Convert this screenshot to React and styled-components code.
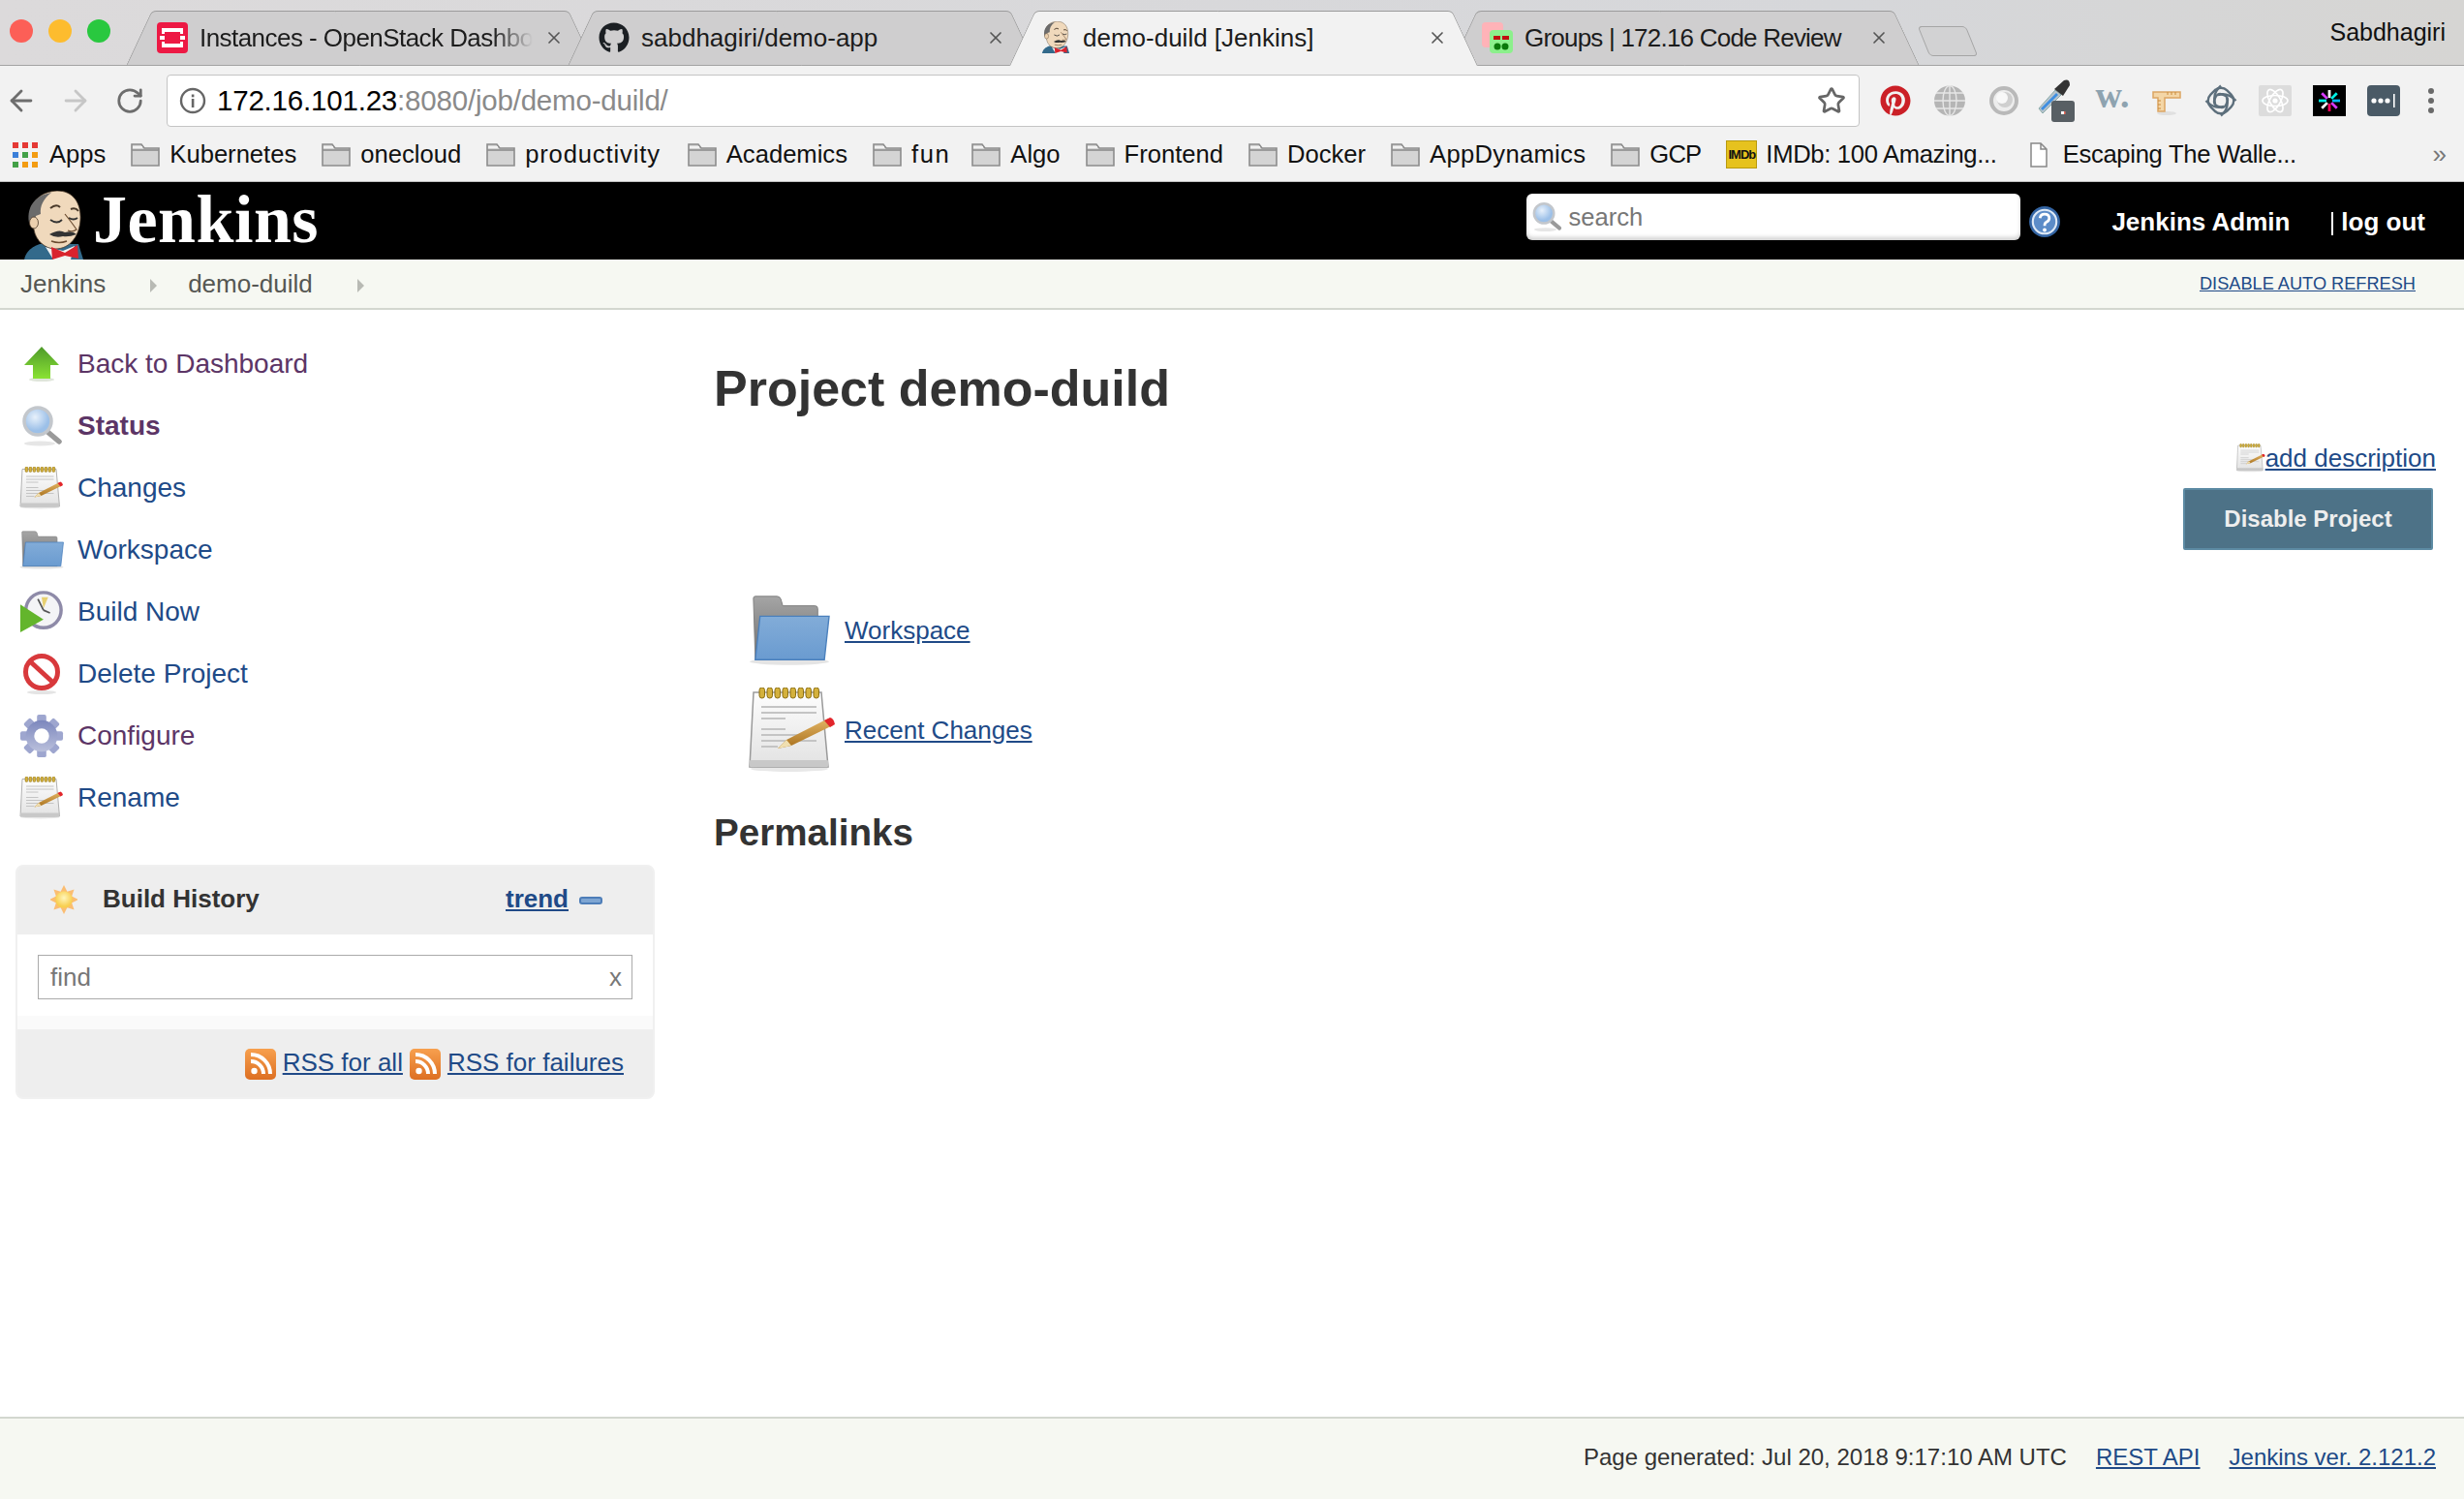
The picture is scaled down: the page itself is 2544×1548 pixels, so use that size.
import React from 'react';
import styled, { createGlobalStyle } from 'styled-components';
import { ArrowLeft, ArrowRight, RotateCw, Star, X } from 'lucide-react';
import { FaGithub, FaPinterest } from 'react-icons/fa';

const Global = createGlobalStyle`
  html, body { margin: 0; padding: 0; background: #fff; }
  body { font-family: "Liberation Sans", Arial, sans-serif; color: #333; }
  * { box-sizing: border-box; }
`;

const Page = styled.div`
  display: flex;
  flex-direction: column;
  min-height: 100vh;
`;

/* ---------- browser chrome ---------- */
const TabStrip = styled.div`
  display: flex;
  align-items: flex-end;
  height: 68px;
  border-bottom: 1px solid #a3a3a3;
  background: linear-gradient(90deg, #dcdadb, #d6d7da 75%, #d6d5d3);
`;
const Lights = styled.div`
  flex: 0 0 157px;
  align-self: flex-start;
  display: flex;
  gap: 16px;
  padding: 20px 0 0 10px;
`;
const Light = styled.span`
  width: 24px;
  height: 24px;
  border-radius: 50%;
  background: ${p => p.$c};
`;
const Tab = styled.div`
  position: relative;
  flex: 0 0 483px;
  min-width: 0;
  height: 57px;
  margin-left: -27px;
  margin-bottom: -1px;
  padding: 0 31px 2px 32px;
  display: flex;
  align-items: center;
  gap: 12px;
  z-index: ${p => (p.$active ? 3 : 1)};
  &::before, &::after {
    content: '';
    position: absolute;
    top: 0;
    bottom: 0;
    background: ${p => (p.$active ? '#f2f2f2' : '#cfcecf')};
    border-top: 1px solid #9c9c9c;
    ${p => (p.$active ? '' : 'border-bottom: 1px solid #a3a3a3;')}
  }
  &::before {
    left: 0;
    right: 50%;
    transform-origin: bottom left;
    transform: skewX(-25deg);
    border-left: 1px solid #9c9c9c;
    border-top-left-radius: 5px;
  }
  &::after {
    left: 50%;
    right: 0;
    transform-origin: bottom right;
    transform: skewX(25deg);
    border-right: 1px solid #9c9c9c;
    border-top-right-radius: 5px;
  }
`;
const TabIcon = styled.span`
  position: relative;
  z-index: 1;
  flex: 0 0 32px;
  height: 32px;
  display: flex;
  align-items: center;
  justify-content: center;
`;
const TabTitle = styled.span`
  position: relative;
  z-index: 1;
  flex: 1;
  min-width: 0;
  overflow: hidden;
  white-space: nowrap;
  font-size: 26px;
  letter-spacing: ${p => p.$ls ?? 0}px;
  line-height: 32px;
  color: #1c1c1c;
  ${p => p.$fade && 'mask-image: linear-gradient(90deg, #000 88%, transparent 100%);'}
`;
const TabClose = styled(X)`
  position: relative;
  z-index: 1;
  flex: 0 0 20px;
  color: #555;
`;
const NewTab = styled.div`
  flex: 0 0 50px;
  height: 31px;
  margin: 0 0 9px 5px;
  align-self: flex-end;
  background: #d2d2d3;
  border: 1px solid #a5a5a5;
  border-radius: 4px;
  transform: skewX(22deg);
`;
const Profile = styled.span`
  margin-left: auto;
  align-self: flex-start;
  padding: 18px 19px 0 0;
  font-size: 25px;
  line-height: 30px;
  color: #111;
`;

const Toolbar = styled.div`
  display: flex;
  align-items: center;
  gap: 12px;
  height: 72px;
  background: #f2f2f2;
`;
const NavButton = styled.span`
  flex: 0 0 44px;
  display: flex;
  justify-content: center;
  color: ${p => (p.$off ? '#c6c6c6' : '#6d6d6d')};
`;
const Omnibox = styled.div`
  flex: 0 0 1748px;
  height: 54px;
  margin-left: 4px;
  padding: 0 13px 0 12px;
  display: flex;
  align-items: center;
  background: #fff;
  border: 1px solid #c4c4c4;
  border-radius: 4px;
`;
const Url = styled.span`
  margin-left: 11px;
  flex: 1;
  font-size: 29.5px;
  letter-spacing: -0.2px;
  color: #8a8a8a;
  b { font-weight: 400; color: #000; }
`;
const Extensions = styled.div`
  display: flex;
  align-items: center;
  margin-left: -3px;
`;
const Ext = styled.span`
  flex: 0 0 56px;
  display: flex;
  justify-content: center;
  align-items: center;
  height: 50px;
  ${p => p.$shift && `margin-left: ${p.$shift}px;`}
`;
const ExtW = styled.span`
  font-family: "Liberation Serif", serif;
  font-weight: 700;
  font-size: 38px;
  color: #8ea3b0;
  line-height: 30px;
  margin-top: -12px;
`;

const Bookmarks = styled.div`
  display: flex;
  align-items: center;
  gap: 26px;
  height: 48px;
  padding: 0 0 8px 13px;
  background: #f2f2f2;
  border-bottom: 1px solid #c0c0c0;
`;
const Mark = styled.span`
  display: flex;
  align-items: center;
  gap: ${p => p.$gap ?? 10}px;
  margin-left: ${p => p.$push ?? 0}px;
  font-size: 25.6px;
  letter-spacing: ${p => p.$ls ?? 0}px;
  color: #111;
  white-space: nowrap;
`;
const More = styled.span`
  margin-left: auto;
  padding-right: 18px;
  font-size: 26px;
  color: #777;
`;
const ImdbIcon = styled.span`
  flex: 0 0 32px;
  height: 29px;
  background: #e6c21e;
  border: 1px solid #b89a10;
  color: #111;
  font-size: 13px;
  font-weight: 700;
  line-height: 27px;
  letter-spacing: -1px;
  overflow: hidden;
  text-align: center;
`;

/* ---------- jenkins header ---------- */
const Header = styled.header`
  display: flex;
  align-items: flex-end;
  height: 80px;
  background: #000;
  color: #fff;
`;
const Logo = styled.div`
  display: flex;
  align-items: flex-end;
  gap: 8px;
  padding-left: 23px;
  svg { display: block; }
`;
const Brand = styled.span`
  font-family: "Liberation Serif", serif;
  font-weight: 700;
  font-size: 70px;
  letter-spacing: 0.5px;
  line-height: 80px;
  align-self: center;
  margin-top: -12px;
`;
const Search = styled.div`
  margin: 0 0 20px auto;
  width: 510px;
  height: 48px;
  padding: 0 6px 0 5px;
  display: flex;
  align-items: center;
  gap: 6px;
  background: #fff;
  border-radius: 6px;
  box-shadow: inset 0 -3px 4px rgba(0, 0, 0, 0.18);
  font-size: 25.6px;
  color: #777;
`;
const Help = styled.span`
  margin: 0 0 22px 8px;
  display: flex;
`;
const UserLink = styled.span`
  margin: 0 0 22px 52px;
  font-size: 26px;
  font-weight: 700;
  line-height: 34px;
`;
const LogOut = styled.span`
  margin: 0 40px 22px 43px;
  font-size: 26px;
  font-weight: 700;
  line-height: 34px;
  padding-left: 10px;
  background: linear-gradient(#fff, #fff) 0 7px / 2px 24px no-repeat;
`;

const Crumbs = styled.nav`
  display: flex;
  align-items: center;
  height: 52px;
  padding: 0 50px 0 21px;
  background: #f6f8f2;
  border-bottom: 2px solid #d3d7cf;
  font-size: 26px;
  color: #555753;
`;
const Crumb = styled.span`
  line-height: 30px;
`;
const CrumbArrow = styled.span`
  width: 0;
  height: 0;
  margin: 3px 32px 0 46px;
  border-left: 7px solid #b8bab4;
  border-top: 7px solid transparent;
  border-bottom: 7px solid transparent;
`;
const Refresh = styled.a`
  margin-left: auto;
  font-size: 18.2px;
  color: #204a87;
  text-decoration: underline;
`;

/* ---------- body ---------- */
const Columns = styled.div`
  flex: 1;
  display: grid;
  grid-template-columns: 737px 1fr;
`;
const Side = styled.aside`
  padding-top: 24px;
`;
const SideRow = styled.div`
  display: flex;
  align-items: center;
  height: 64px;
  padding-left: 20px;
  gap: 14px;
  font-size: 28px;
  font-weight: ${p => (p.$bold ? 700 : 400)};
  color: ${p => (p.$visited ? '#5c3566' : '#204a87')};
`;
const SideIcon = styled.span`
  flex: 0 0 46px;
  min-width: 0;
  display: flex;
  justify-content: center;
  svg { flex: none; }
`;
const Panel = styled.section`
  width: 660px;
  margin: 37px 0 0 16px;
  background: #eee;
  border: 2px solid #f0f0f0;
  border-radius: 8px;
  overflow: hidden;
`;
const PanelHead = styled.div`
  display: flex;
  align-items: center;
  height: 70px;
  padding: 0 0 3px 34px;
`;
const PanelTitle = styled.span`
  margin-left: 26px;
  font-size: 26px;
  font-weight: 700;
  color: #333;
`;
const Trend = styled.a`
  margin-left: auto;
  font-size: 26px;
  font-weight: 700;
  color: #204a87;
  text-decoration: underline;
`;
const Pill = styled.span`
  width: 24px;
  height: 8px;
  margin: 3px 52px 0 11px;
  background: #7ea5d2;
  border: 2px solid #4d7db8;
  border-radius: 3px;
`;
const PanelBody = styled.div`
  height: 98px;
  padding: 21px 21px 0;
  background: linear-gradient(#fff 84px, #fafafa 84px);
`;
const Find = styled.div`
  display: flex;
  justify-content: space-between;
  align-items: center;
  height: 46px;
  padding: 0 10px 0 12px;
  background: #fff;
  border: 1px solid #aaa;
  font-size: 26px;
  color: #777;
`;
const PanelFoot = styled.div`
  display: flex;
  justify-content: flex-end;
  align-items: center;
  gap: 7px;
  height: 70px;
  padding: 0 30px 2px 0;
  font-size: 26px;
`;
const RssLink = styled.a`
  color: #204a87;
  text-decoration: underline;
`;
const RssIcon = styled.span`
  display: flex;
  margin-top: 3px;
`;

const Main = styled.main`
  padding: 0 29px 0 0;
  display: flex;
  flex-direction: column;
`;
const Title = styled.h1`
  margin: 50px 0 0;
  font-size: 52px;
  line-height: 62px;
  font-weight: 700;
  color: #333;
`;
const Description = styled.div`
  display: flex;
  justify-content: flex-end;
  align-items: center;
  margin-top: 25px;
  height: 32px;
  font-size: 26px;
  a { color: #204a87; text-decoration: underline; }
`;
const ActionRow = styled.div`
  display: flex;
  justify-content: flex-end;
  margin-top: 15px;
  padding-right: 3px;
`;
const DisableButton = styled.button`
  width: 258px;
  height: 64px;
  padding: 0;
  font-family: inherit;
  font-size: 24px;
  font-weight: 700;
  color: #eee;
  background: #4d7287;
  border: 2px solid #5c8aa3;
  border-radius: 2px;
`;
const LinkList = styled.div`
  display: flex;
  flex-direction: column;
  gap: 21px;
  margin-top: 45px;
  padding-left: 36px;
`;
const LinkRow = styled.div`
  display: flex;
  align-items: center;
  gap: ${p => p.$gap}px;
  font-size: 26px;
  a {
    color: #204a87;
    text-decoration: underline;
  }
  svg { display: block; }
`;
const Subhead = styled.h2`
  margin: 39px 0 0;
  font-size: 38.6px;
  line-height: 46px;
  font-weight: 700;
  color: #333;
`;

const Footer = styled.footer`
  display: flex;
  justify-content: flex-end;
  align-items: center;
  gap: 30px;
  height: 85px;
  padding: 0 29px 3px 0;
  background: #f6f8f2;
  border-top: 2px solid #d3d7cf;
  font-size: 24px;
  color: #333;
  a { color: #204a87; text-decoration: underline; }
`;

/* ---------- drawings ---------- */
const Butler = ({ w = 65, h = 71 }) => (
  <svg width={w} height={h} viewBox="0 0 65 71">
    <path d="M2 71 C4 62 10 58 18 55 L58 55 L63 71 Z" fill="#336a8b" />
    <path d="M24 58 L42 62 L54 57 L50 71 L32 71 Z" fill="#f2f2f2" />
    <path d="M8 28 C8 10 20 1 36 0 C52 0 61 12 60 30 C59 46 50 60 34 60 C24 60 14 52 12 40 Z" fill="#f0d9bc" stroke="#4a3a2a" strokeWidth="0.8" />
    <path d="M7 33 C4 14 16 4 30 2 C22 8 18 16 19 24 L14 26 L12 36 Z" fill="#6b6b6b" />
    <ellipse cx="12" cy="33" rx="4.5" ry="6" fill="#ecd0ae" stroke="#4a3a2a" strokeWidth="0.8" />
    <path d="M29 18 q6 -5 10 -1 M50 19 q5 -2 8 2" fill="none" stroke="#4a3a2a" strokeWidth="2" />
    <path d="M29 30 q7 5 12 0 M48 28 q5 3 9 0" fill="none" stroke="#333" strokeWidth="1.8" />
    <path d="M44 24 q8 10 12 16 q-4 3 -9 1" fill="none" stroke="#6b4c30" strokeWidth="1.2" />
    <path d="M28 45 q10 -6 16 -2 q8 -2 12 2 q-8 3 -14 2 q-8 2 -14 -2 Z" fill="#333" />
    <path d="M30 52 q8 3 16 0" fill="none" stroke="#6b4c30" strokeWidth="1.4" />
    <path d="M30 58 L44 64 L57 56 L58 70 L44 67 L31 71 Z" fill="#d9232e" />
  </svg>
);

const OpenStackIcon = () => (
  <svg width="32" height="32" viewBox="0 0 32 32">
    <rect width="32" height="32" rx="4" fill="#ed1944" />
    <path d="M5 6 H27 V12 H24 V10 H8 V12 H5 Z M5 20 H8 V22 H24 V20 H27 V26 H5 Z M3 14 H8 V18 H3 Z M24 14 H29 V18 H24 Z" fill="#fff" />
  </svg>
);
const GroupsIcon = () => (
  <svg width="32" height="32" viewBox="0 0 32 32">
    <rect x="0" y="0" width="22" height="26" rx="4" fill="#ffb3b8" />
    <rect x="8" y="8" width="24" height="24" rx="4" fill="#8cf08c" />
    <rect x="12" y="14" width="7" height="4" fill="#c01010" />
    <rect x="21" y="14" width="7" height="4" fill="#c01010" />
    <circle cx="16" cy="25" r="3.5" fill="#0a7a0a" />
    <circle cx="24" cy="25" r="3.5" fill="#0a7a0a" />
  </svg>
);

const FolderMark = () => (
  <svg width="30" height="26" viewBox="0 0 30 26">
    <path d="M1 24 V2 H11 L14 6 H29 V24 Z" fill="#d4d4d4" stroke="#8c8c8c" strokeWidth="1.6" />
    <path d="M1 8 H29" stroke="#8c8c8c" strokeWidth="1.6" />
    <path d="M2 5 H12" stroke="#f2f2f2" strokeWidth="2" />
  </svg>
);
const AppsMark = () => {
  const c = ['#e53935', '#e53935', '#e53935', '#3b7fd9', '#43a047', '#f39c12', '#43a047', '#f39c12', '#f39c12'];
  return (
    <svg width="26" height="26" viewBox="0 0 26 26">
      {c.map((f, i) => (
        <rect key={i} x={(i % 3) * 10} y={Math.floor(i / 3) * 10} width="6" height="6" fill={f} />
      ))}
    </svg>
  );
};
const PageMark = () => (
  <svg width="18" height="26" viewBox="0 0 18 26">
    <path d="M1 1 H11 L17 7 V25 H1 Z M11 1 V7 H17" fill="#fff" stroke="#888" strokeWidth="1.5" />
  </svg>
);
const InfoIcon = () => (
  <svg width="28" height="28" viewBox="0 0 28 28">
    <circle cx="14" cy="14" r="12" fill="none" stroke="#666" strokeWidth="2.4" />
    <rect x="12.8" y="12" width="2.6" height="9" fill="#666" />
    <rect x="12.8" y="7.5" width="2.6" height="2.8" fill="#666" />
  </svg>
);
const Globe = () => (
  <svg width="34" height="32" viewBox="0 0 34 32">
    <ellipse cx="17" cy="16" rx="16" ry="15.5" fill="#b5b5b5" />
    <g fill="none" stroke="#e6e6e6" strokeWidth="1.4">
      <ellipse cx="17" cy="16" rx="7" ry="15.5" />
      <path d="M17 0 V32 M1 16 H33 M3 8 H31 M3 24 H31" />
    </g>
  </svg>
);
const Marble = () => (
  <svg width="30" height="30" viewBox="0 0 30 30">
    <circle cx="15" cy="15" r="13" fill="#ededed" stroke="#b9b9b9" strokeWidth="4" />
    <circle cx="16" cy="14" r="8" fill="#cfcfcf" />
    <circle cx="13" cy="12" r="6" fill="#f8f8f8" />
  </svg>
);
const Dropper = () => (
  <svg width="44" height="44" viewBox="0 0 44 44">
    <path d="M2 30 L19 11 L25 16 L6 35 Z" fill="#b9c4cc" stroke="#8aa" strokeWidth="1" />
    <path d="M4 30 L20 14 L22 16 L6 32 Z" fill="#3f8fe0" />
    <path d="M18 10 L28 1 Q34 -1 34 6 L27 17 Z" fill="#333" />
    <rect x="15" y="22" width="24" height="22" rx="3" fill="#585f64" />
    <rect x="25" y="33" width="3" height="3" fill="#fff" />
    <rect x="28" y="33" width="1.5" height="3" fill="#e86a5a" />
  </svg>
);
const Ruler = () => (
  <svg width="30" height="32" viewBox="0 0 30 32">
    <ellipse cx="15" cy="29" rx="10" ry="2" fill="#e0e0e0" />
    <path d="M1 7 H29 V13 H13 V27 H6 V13 H1 Z" fill="#f4d6a6" stroke="#dba563" strokeWidth="1.5" />
    <path d="M16 7 V10 M20 7 V10 M24 7 V10 M6 16 H9 M6 20 H9 M6 24 H9" stroke="#c98a3a" strokeWidth="1" />
  </svg>
);
const Swirl = () => (
  <svg width="34" height="34" viewBox="0 0 34 34" fill="none" stroke="#5d6f7c" strokeWidth="2.4">
    <rect x="5" y="5" width="24" height="24" rx="9" transform="rotate(45 17 17)" />
    <rect x="10.5" y="10.5" width="13" height="13" rx="5" transform="rotate(20 17 17)" />
    <path d="M17 1.5 Q8 9 11 20 M32.5 17 Q24 8 14 11 M17 32.5 Q26 25 23 14 M1.5 17 Q10 26 20 23" />
  </svg>
);
const ReactExt = () => (
  <svg width="34" height="32" viewBox="0 0 34 32">
    <rect width="34" height="32" rx="2" fill="#dcdcdc" />
    <g fill="none" stroke="#fff" strokeWidth="1.6">
      <ellipse cx="17" cy="16" rx="13" ry="5.5" />
      <ellipse cx="17" cy="16" rx="13" ry="5.5" transform="rotate(60 17 16)" />
      <ellipse cx="17" cy="16" rx="13" ry="5.5" transform="rotate(120 17 16)" />
    </g>
    <circle cx="17" cy="16" r="2.6" fill="#fff" />
  </svg>
);
const JwtExt = () => {
  const c = ['#fff', '#00f2e6', '#00b9f1', '#d63aff', '#fb015b', '#fff', '#00f2e6', '#d63aff'];
  return (
    <svg width="34" height="32" viewBox="0 0 34 32">
      <rect width="34" height="32" fill="#000" />
      {c.map((f, i) => (
        <rect key={i} x="15.6" y="5" width="2.8" height="8" fill={f} transform={`rotate(${i * 45} 17 16)`} />
      ))}
    </svg>
  );
};
const DotsExt = () => (
  <svg width="34" height="32" viewBox="0 0 34 32">
    <rect width="34" height="32" rx="4" fill="#4a5a66" />
    <circle cx="7" cy="16" r="2.6" fill="#fff" />
    <circle cx="14" cy="16" r="2.6" fill="#fff" />
    <circle cx="21" cy="16" r="2.6" fill="#fff" />
    <rect x="27" y="9" width="1.6" height="14" fill="#fff" />
  </svg>
);
const Kebab = () => (
  <svg width="10" height="28" viewBox="0 0 10 28">
    <circle cx="5" cy="4" r="3" fill="#6a6a6a" />
    <circle cx="5" cy="14" r="3" fill="#6a6a6a" />
    <circle cx="5" cy="24" r="3" fill="#6a6a6a" />
  </svg>
);

const Magnifier = ({ size = 44 }) => (
  <svg width={size} height={size} viewBox="0 0 44 44">
    <defs>
      <radialGradient id="lens" cx="40%" cy="35%">
        <stop offset="0" stopColor="#e8f1fb" />
        <stop offset="1" stopColor="#9cc0e8" />
      </radialGradient>
    </defs>
    <ellipse cx="20" cy="40" rx="16" ry="2.5" fill="#e6e6e6" />
    <path d="M27 27 L40 38" stroke="#9a9a9a" strokeWidth="5.5" strokeLinecap="round" />
    <circle cx="18" cy="17" r="14" fill="url(#lens)" stroke="#c3c7cc" strokeWidth="3.5" />
  </svg>
);
const UpArrow = () => (
  <svg width="38" height="38" viewBox="0 0 38 38">
    <defs>
      <linearGradient id="up" x1="0" y1="0" x2="0" y2="1">
        <stop offset="0" stopColor="#4e9a2a" />
        <stop offset="1" stopColor="#8ae234" />
      </linearGradient>
    </defs>
    <ellipse cx="19" cy="35" rx="13" ry="2" fill="#dfe5da" />
    <path d="M19 1 L37 20 H28 V34 H10 V20 H1 Z" fill="url(#up)" />
  </svg>
);
const Notepad = ({ w = 46, h = 44 }) => (
  <svg width={w} height={h} viewBox="0 0 90 88">
    <defs>
      <linearGradient id="padp" x1="0" y1="0" x2="0" y2="1">
        <stop offset="0" stopColor="#fdfdfd" />
        <stop offset="1" stopColor="#e2e2e2" />
      </linearGradient>
      <linearGradient id="pen" x1="0" y1="0" x2="0" y2="1">
        <stop offset="0" stopColor="#e3b565" />
        <stop offset="1" stopColor="#a8701c" />
      </linearGradient>
    </defs>
    <ellipse cx="42" cy="84" rx="40" ry="3" fill="#e8e8e8" />
    <path d="M5 5 H75 L82 82 H1 Z" fill="url(#padp)" stroke="#9a9a9a" strokeWidth="1.5" />
    <rect x="1" y="75" width="81" height="7" rx="1" fill="#c8c8c8" />
    {[0, 1, 2, 3, 4, 5, 6, 7].map(i => (
      <rect key={i} x={11 + i * 8} y="0" width="5.5" height="11" rx="2.7" fill="#d4b13c" stroke="#8a6d12" strokeWidth="1" />
    ))}
    <g stroke="#c4c4c4" strokeWidth="2">
      <path d="M13 20 H70 M13 26 H70 M13 32 H38 M13 43 H38 M13 49 H60 M13 55 H70 M13 61 H30" />
    </g>
    <path d="M30 63 L39 54 L82 32 L87 39 L44 60 Z" fill="url(#pen)" />
    <path d="M30 63 L39 54 L44 60 Z" fill="#f0dfb0" />
    <path d="M78 34 L84 31 Q88 32 89 38 L84 41 Z" fill="#e2252b" />
  </svg>
);
const BlueFolder = ({ w = 46, h = 40 }) => (
  <svg width={w} height={h} viewBox="0 0 86 74">
    <defs>
      <linearGradient id="fold" x1="0" y1="0" x2="0" y2="1">
        <stop offset="0" stopColor="#82acd8" />
        <stop offset="1" stopColor="#6a9bd0" />
      </linearGradient>
      <linearGradient id="foldb" x1="0" y1="0" x2="0" y2="1">
        <stop offset="0" stopColor="#a5a5a5" />
        <stop offset="1" stopColor="#6e6e6e" />
      </linearGradient>
    </defs>
    <ellipse cx="43" cy="70" rx="42" ry="3.5" fill="#e4e4e4" />
    <path d="M5 3 Q5 1 7 1 H30 Q33 1 34 4 L36 11 H70 Q73 11 73 14 V68 H7 Z" fill="url(#foldb)" stroke="#808080" strokeWidth="1" />
    <path d="M12 22 H85 L80 68 H7 Z" fill="url(#fold)" stroke="#4a80bd" strokeWidth="1.4" />
  </svg>
);
const BuildClock = () => (
  <svg width="46" height="46" viewBox="0 0 48 48">
    <circle cx="26" cy="22" r="19" fill="#f4f4f6" stroke="#8e8aa8" strokeWidth="3.6" />
    <path d="M24 8 L31 8 L26 20 Z" fill="#e8d070" />
    <path d="M26 22 L20 10 M26 22 L33 25" stroke="#555" strokeWidth="1.8" />
    <path d="M1 16 L26 32 L1 46 Z" fill="#63b52c" />
  </svg>
);
const NoEntry = () => (
  <svg width="44" height="44" viewBox="0 0 44 44">
    <ellipse cx="22" cy="41" rx="15" ry="2" fill="#e4e4e4" />
    <circle cx="22" cy="20" r="16.5" fill="#fff" stroke="#d8393c" strokeWidth="5" />
    <path d="M10 9 L34 31" stroke="#d8393c" strokeWidth="5" />
  </svg>
);
const Gear = () => (
  <svg width="48" height="46" viewBox="0 0 50 48">
    <defs>
      <linearGradient id="gear" x1="0" y1="0" x2="0" y2="1">
        <stop offset="0" stopColor="#7c87bd" />
        <stop offset="1" stopColor="#bac0dc" />
      </linearGradient>
    </defs>
    <g fill="url(#gear)">
      {[0, 45, 90, 135].map(a => (
        <rect key={a} x="20" y="1" width="10" height="46" rx="2" transform={`rotate(${a} 25 24)`} fill="#9ea6cf" />
      ))}
      <circle cx="25" cy="24" r="17" />
    </g>
    <circle cx="25" cy="24" r="8" fill="#fff" />
  </svg>
);
const Sun = () => (
  <svg width="28" height="36" viewBox="0 0 30 38">
    <defs>
      <radialGradient id="sun" cx="50%" cy="40%">
        <stop offset="0" stopColor="#fff6bc" />
        <stop offset="1" stopColor="#f8cf50" />
      </radialGradient>
    </defs>
    {[0, 45, 90, 135, 180, 225, 270, 315].map(a => (
      <path key={a} d="M15 3 L19 11 H11 Z" fill="#fbbd72" transform={`rotate(${a} 15 19)`} />
    ))}
    <circle cx="15" cy="19" r="9.5" fill="url(#sun)" />
  </svg>
);
const Rss = () => (
  <svg width="32" height="32" viewBox="0 0 32 32">
    <defs>
      <linearGradient id="rss" x1="0" y1="0" x2="0" y2="1">
        <stop offset="0" stopColor="#f7a04e" />
        <stop offset="1" stopColor="#dd6f22" />
      </linearGradient>
    </defs>
    <rect width="32" height="32" rx="5" fill="url(#rss)" />
    <circle cx="9.5" cy="23" r="3.2" fill="#fff" />
    <path d="M6 13 A13 13 0 0 1 19 26 M6 6 A20 20 0 0 1 26 26" fill="none" stroke="#fff" strokeWidth="4" />
  </svg>
);
const HelpIcon = () => (
  <svg width="34" height="34" viewBox="0 0 32 32">
    <circle cx="16" cy="16" r="15" fill="#3465a4" />
    <circle cx="16" cy="16" r="11.5" fill="#5c8cc8" stroke="#dfe9f5" strokeWidth="2" />
    <path d="M11.5 12.5 Q12 8.5 16 8.5 Q20.5 8.5 20.5 12.5 Q20.5 15 17.5 16.5 Q16 17.2 16 20" fill="none" stroke="#fff" strokeWidth="2.6" />
    <circle cx="16" cy="24" r="1.8" fill="#fff" />
  </svg>
);

const bookmarks = [
  { label: 'Kubernetes' },
  { label: 'onecloud' },
  { label: 'productivity', ls: 0.85 },
  { label: 'Academics', push: 2 },
  { label: 'fun', ls: 1.6 },
  { label: 'Algo', push: -4 },
  { label: 'Frontend' },
  { label: 'Docker' },
  { label: 'AppDynamics', ls: 0.3 },
  { label: 'GCP', ls: -0.8 },
];

const sideItems = [
  { label: 'Back to Dashboard', icon: <UpArrow />, visited: true },
  { label: 'Status', icon: <Magnifier />, visited: true, bold: true },
  { label: 'Changes', icon: <Notepad /> },
  { label: 'Workspace', icon: <BlueFolder /> },
  { label: 'Build Now', icon: <BuildClock /> },
  { label: 'Delete Project', icon: <NoEntry /> },
  { label: 'Configure', icon: <Gear />, visited: true },
  { label: 'Rename', icon: <Notepad /> },
];

export default function App() {
  return (
    <Page>
      <Global />
      <TabStrip>
        <Lights>
          <Light $c="#fc5f57" />
          <Light $c="#fdbc2e" />
          <Light $c="#29c83f" />
        </Lights>
        <Tab>
          <TabIcon><OpenStackIcon /></TabIcon>
          <TabTitle $fade $ls={-0.55}>Instances - OpenStack Dashbo</TabTitle>
          <TabClose size={22} />
        </Tab>
        <Tab>
          <TabIcon><FaGithub size={32} color="#1b1f23" /></TabIcon>
          <TabTitle>sabdhagiri/demo-app</TabTitle>
          <TabClose size={22} />
        </Tab>
        <Tab $active>
          <TabIcon><Butler w={30} h={33} /></TabIcon>
          <TabTitle>demo-duild [Jenkins]</TabTitle>
          <TabClose size={22} />
        </Tab>
        <Tab>
          <TabIcon><GroupsIcon /></TabIcon>
          <TabTitle $ls={-0.78}>Groups | 172.16 Code Review</TabTitle>
          <TabClose size={22} />
        </Tab>
        <NewTab />
        <Profile>Sabdhagiri</Profile>
      </TabStrip>

      <Toolbar>
        <NavButton><ArrowLeft size={34} strokeWidth={2} /></NavButton>
        <NavButton $off><ArrowRight size={34} strokeWidth={2} /></NavButton>
        <NavButton><RotateCw size={30} strokeWidth={2.2} /></NavButton>
        <Omnibox>
          <InfoIcon />
          <Url><b>172.16.101.23</b>:8080/job/demo-duild/</Url>
          <Star size={30} color="#666" strokeWidth={2.2} />
        </Omnibox>
        <Extensions>
          <Ext><FaPinterest size={32} color="#cb2027" /></Ext>
          <Ext><Globe /></Ext>
          <Ext><Marble /></Ext>
          <Ext><Dropper /></Ext>
          <Ext><ExtW>w.</ExtW></Ext>
          <Ext><Ruler /></Ext>
          <Ext><Swirl /></Ext>
          <Ext><ReactExt /></Ext>
          <Ext><JwtExt /></Ext>
          <Ext><DotsExt /></Ext>
          <Ext $shift={-7}><Kebab /></Ext>
        </Extensions>
      </Toolbar>

      <Bookmarks>
        <Mark $gap={12}><AppsMark />Apps</Mark>
        {bookmarks.map(b => (
          <Mark key={b.label} $ls={b.ls} $push={b.push}><FolderMark />{b.label}</Mark>
        ))}
        <Mark $gap={9} $ls={-0.32}><ImdbIcon>IMDb</ImdbIcon>IMDb: 100 Amazing...</Mark>
        <Mark $gap={16} $ls={-0.3} $push={8}><PageMark />Escaping The Walle...</Mark>
        <More>»</More>
      </Bookmarks>

      <Header>
        <Logo>
          <Butler />
          <Brand>Jenkins</Brand>
        </Logo>
        <Search>
          <Magnifier size={32} />
          search
        </Search>
        <Help><HelpIcon /></Help>
        <UserLink>Jenkins Admin</UserLink>
        <LogOut>log out</LogOut>
      </Header>

      <Crumbs>
        <Crumb>Jenkins</Crumb>
        <CrumbArrow />
        <Crumb>demo-duild</Crumb>
        <CrumbArrow />
        <Refresh>DISABLE AUTO REFRESH</Refresh>
      </Crumbs>

      <Columns>
        <Side>
          {sideItems.map(i => (
            <SideRow key={i.label} $visited={i.visited} $bold={i.bold}>
              <SideIcon>{i.icon}</SideIcon>
              {i.label}
            </SideRow>
          ))}
          <Panel>
            <PanelHead>
              <Sun />
              <PanelTitle>Build History</PanelTitle>
              <Trend>trend</Trend>
              <Pill />
            </PanelHead>
            <PanelBody>
              <Find>find<span>x</span></Find>
            </PanelBody>
            <PanelFoot>
              <RssIcon><Rss /></RssIcon>
              <RssLink>RSS for all</RssLink>
              <RssIcon><Rss /></RssIcon>
              <RssLink>RSS for failures</RssLink>
            </PanelFoot>
          </Panel>
        </Side>
        <Main>
          <Title>Project demo-duild</Title>
          <Description>
            <Notepad w={30} h={30} />
            <a>add description</a>
          </Description>
          <ActionRow>
            <DisableButton>Disable Project</DisableButton>
          </ActionRow>
          <LinkList>
            <LinkRow $gap={15}>
              <BlueFolder w={84} h={76} />
              <a>Workspace</a>
            </LinkRow>
            <LinkRow $gap={9}>
              <Notepad w={90} h={88} />
              <a>Recent Changes</a>
            </LinkRow>
          </LinkList>
          <Subhead>Permalinks</Subhead>
        </Main>
      </Columns>

      <Footer>
        <span>Page generated: Jul 20, 2018 9:17:10 AM UTC</span>
        <a>REST API</a>
        <a>Jenkins ver. 2.121.2</a>
      </Footer>
    </Page>
  );
}
